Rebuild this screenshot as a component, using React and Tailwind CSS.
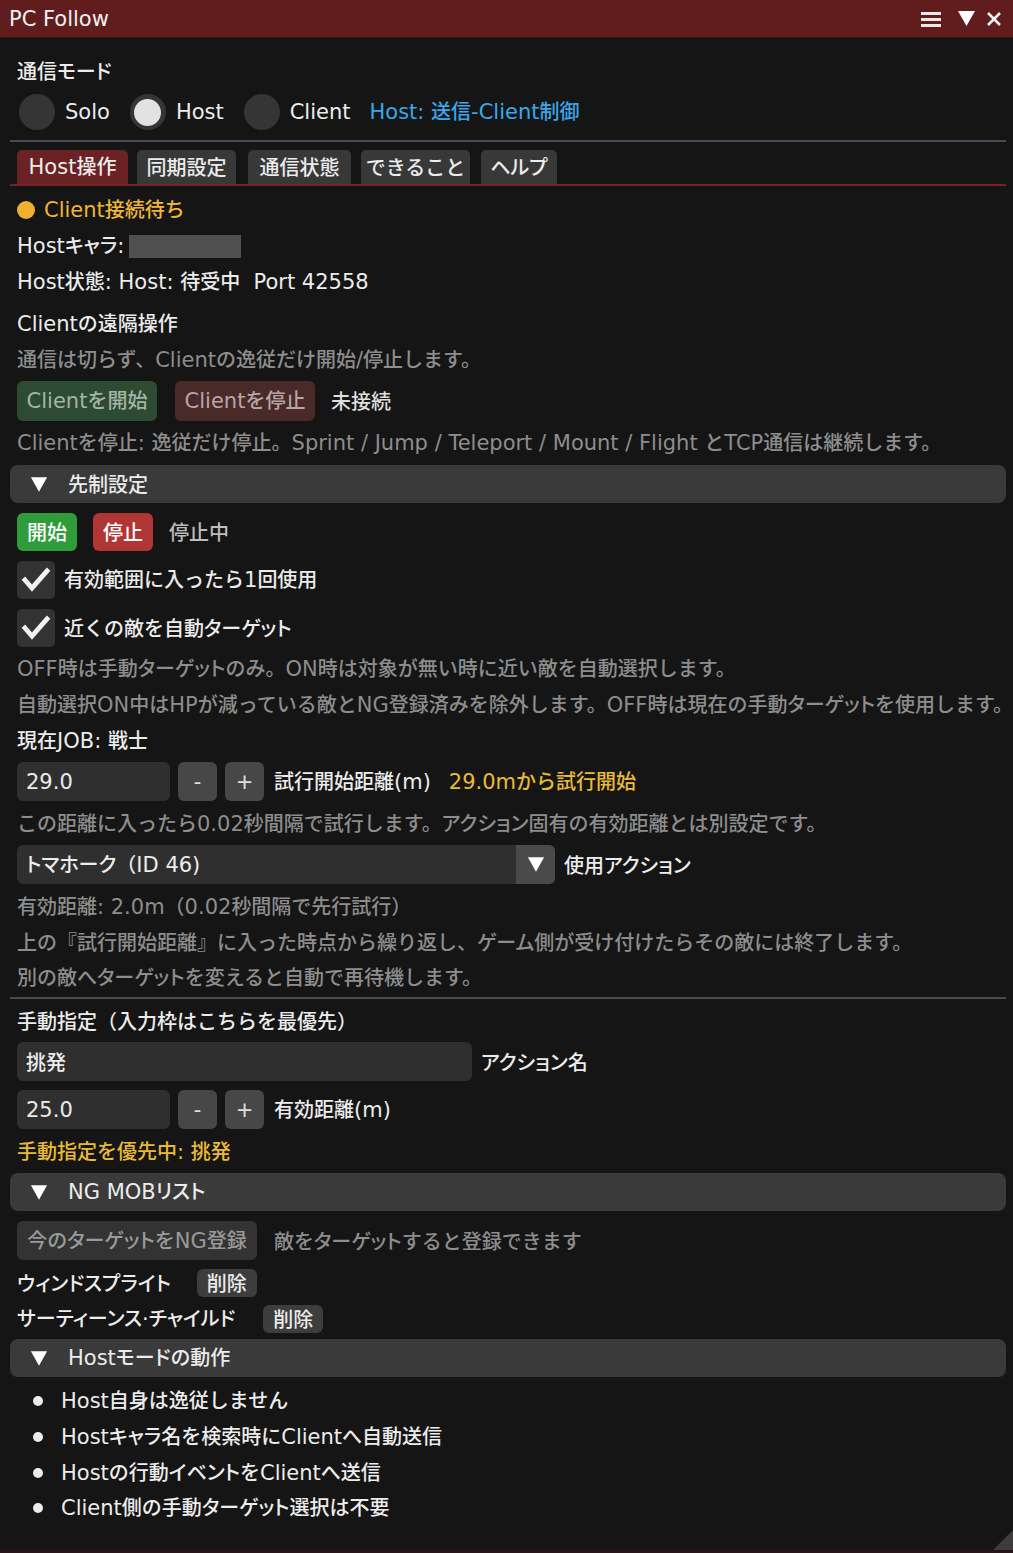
import React from "react";

const SPLIT = /([\u30A0-\u30FF]+|[\x20-\x7E\u00B7]+)/;
const KATA = /^[\u30A0-\u30FF]+$/;
const LAT = /^[\x20-\x7E\u00B7]+$/;

const T = ({ children }) => {
  const s = String(children);
  const parts = s.split(SPLIT).filter((p) => p !== "");
  return (
    <span className="whitespace-pre">
      {parts.map((p, i) => {
        if (KATA.test(p)) return <span key={i} className="[font-feature-settings:'palt']">{p}</span>;
        if (LAT.test(p)) return <span key={i} className="font-['DejaVu_Sans',sans-serif] text-[21px] font-normal">{p}</span>;
        return <span key={i}>{p}</span>;
      })}
    </span>
  );
};

const Tri = ({ className = "" }) => (
  <svg viewBox="0 0 20 18" className={className}>
    <path d="M1 1 L19 1 L10 17 Z" fill="currentColor" />
  </svg>
);

const Check = () => (
  <svg viewBox="0 0 38 38" className="w-[38px] h-[38px]">
    <path d="M8 19 L15 27 L30 10" fill="none" stroke="#f2f2f2" strokeWidth="4.8" strokeLinecap="square" strokeLinejoin="miter" />
  </svg>
);

const Header = ({ children, mt }) => (
  <div className={`flex items-center h-[38px] rounded-[8px] bg-[#3a3a3a] ${mt}`}>
    <Tri className="w-[18px] h-[17px] ml-[20px] text-white" />
    <span className="ml-[20px] text-[#ececec]"><T>{children}</T></span>
  </div>
);

const Gray = ({ children, h = "h-[36px]", mt = "" }) => (
  <div className={`flex items-center px-[7px] ${h} ${mt} text-[#8d8d8d] whitespace-nowrap`}><T>{children}</T></div>
);

const Line = ({ children, h = "h-[36px]", mt = "", color = "text-[#ececec]" }) => (
  <div className={`flex items-center px-[7px] ${h} ${mt} ${color} whitespace-nowrap`}>{typeof children === "string" ? <T>{children}</T> : children}</div>
);

const Stepper = ({ value, label, extra }) => (
  <>
    <div className="w-[153px] h-full rounded-[6px] bg-[#2f2f2f] flex items-center pl-[9px] text-[#ececec]"><T>{value}</T></div>
    <div className="ml-[8px] w-[39px] h-full rounded-[6px] bg-[#474747] flex items-center justify-center text-[#e0e0e0]"><T>-</T></div>
    <div className="ml-[8px] w-[39px] h-full rounded-[6px] bg-[#474747] flex items-center justify-center text-[#e0e0e0]"><T>+</T></div>
    <span className="ml-[10px] text-[#ececec]"><T>{label}</T></span>
    {extra}
  </>
);

export default function App() {
  return (
    <div className="w-[1013px] h-[1553px] bg-[#2a1414] font-['Noto_Sans_CJK_JP',sans-serif] font-medium text-[20px] leading-none overflow-hidden">
      <div className="h-[1550px] bg-[#151515] flex flex-col relative">
        {/* title bar */}
        <div className="h-[38px] bg-[#611d1e] flex items-center border-b border-[#3a1010]">
          <span className="ml-[9px] text-[#f0f0f0]"><T>PC Follow</T></span>
          <div className="ml-auto flex items-center mr-[11px]">
            <svg viewBox="0 0 20 16" className="w-[20px] h-[16px]">
              <rect x="0" y="1" width="20" height="3" fill="#e8e8e8" />
              <rect x="0" y="7" width="20" height="3" fill="#e8e8e8" />
              <rect x="0" y="13" width="20" height="3" fill="#e8e8e8" />
            </svg>
            <Tri className="ml-[16px] w-[19px] h-[17px] text-white" />
            <svg viewBox="0 0 16 16" className="ml-[10px] w-[16px] h-[16px]">
              <path d="M2 2 L14 14 M14 2 L2 14" stroke="#f0f0f0" strokeWidth="2.6" />
            </svg>
          </div>
        </div>

        <div className="flex flex-col pl-[10px] pr-[7px] pt-[15px]">
          <Line h="h-[36px]">通信モード</Line>

          {/* radios */}
          <div className="flex items-center h-[38px] mt-[4px] px-[9px] text-[#ececec]">
            <div className="w-[36px] h-[36px] rounded-full bg-[#353535]" />
            <span className="ml-[10px]"><T>Solo</T></span>
            <div className="ml-[20px] w-[36px] h-[36px] rounded-full bg-[#353535] flex items-center justify-center">
              <div className="w-[27px] h-[27px] rounded-full bg-[#e2e2e2]" />
            </div>
            <span className="ml-[10px]"><T>Host</T></span>
            <div className="ml-[20px] w-[36px] h-[36px] rounded-full bg-[#353535]" />
            <span className="ml-[10px]"><T>Client</T></span>
            <span className="ml-[19px] text-[#3aa7ea]"><T>Host: 送信-Client制御</T></span>
          </div>

          <div className="h-[2px] mt-[9px] bg-[#4a4a56]" />

          {/* tabs */}
          <div className="flex items-end h-[34px] mt-[8px] pl-[7px] text-[#ececec]">
            <div className="h-full w-[111px] rounded-t-[5px] bg-[#6a2224] flex items-center justify-center"><T>Host操作</T></div>
            <div className="h-full ml-[9px] w-[99px] rounded-t-[5px] bg-[#383838] flex items-center justify-center"><T>同期設定</T></div>
            <div className="h-full ml-[12px] w-[103px] rounded-t-[5px] bg-[#383838] flex items-center justify-center"><T>通信状態</T></div>
            <div className="h-full ml-[10px] w-[109px] rounded-t-[5px] bg-[#383838] flex items-center justify-center"><T>できること</T></div>
            <div className="h-full ml-[11px] w-[76px] rounded-t-[5px] bg-[#383838] flex items-center justify-center"><T>ヘルプ</T></div>
          </div>
          <div className="h-[2px] bg-[#7a2222]" />

          <Line mt="mt-[6px]" color="text-[#efb43a]">
            <span className="w-[18px] h-[18px] rounded-full bg-[#efb030] mr-[9px]" />
            <T>Client接続待ち</T>
          </Line>
          <Line>
            <T>Hostキャラ:</T>
            <span className="ml-[5px] w-[112px] h-[23px] bg-[#505050]" />
          </Line>
          <Line h="h-[35px]">{"Host状態: Host: 待受中  Port 42558"}</Line>
          <Line mt="mt-[7px]">Clientの遠隔操作</Line>
          <Gray>通信は切らず、Clientの逸従だけ開始/停止します。</Gray>

          <div className="flex items-center h-[40px] mt-[3px] px-[7px]">
            <div className="h-full w-[140px] rounded-[6px] bg-[#2d4a33] text-[#a3b5a5] flex items-center justify-center"><T>Clientを開始</T></div>
            <div className="h-full ml-[18px] w-[140px] rounded-[6px] bg-[#4a2a29] text-[#b6a6a5] flex items-center justify-center"><T>Clientを停止</T></div>
            <span className="ml-[16px] text-[#dedede]"><T>未接続</T></span>
          </div>
          <Gray mt="mt-[4px]">Clientを停止: 逸従だけ停止。Sprint / Jump / Teleport / Mount / Flight とTCP通信は継続します。</Gray>

          <Header mt="mt-[4px]">先制設定</Header>

          <div className="flex items-center h-[38px] mt-[10px] px-[7px]">
            <div className="h-full w-[60px] rounded-[6px] bg-[#2f9c3c] text-white flex items-center justify-center"><T>開始</T></div>
            <div className="h-full ml-[16px] w-[60px] rounded-[6px] bg-[#b03636] text-white flex items-center justify-center"><T>停止</T></div>
            <span className="ml-[16px] text-[#bdbdbd]"><T>停止中</T></span>
          </div>

          <div className="flex items-center h-[38px] mt-[10px] px-[7px] text-[#ececec]">
            <div className="w-[38px] h-[38px] rounded-[5px] bg-[#333333]"><Check /></div>
            <span className="ml-[9px]"><T>有効範囲に入ったら1回使用</T></span>
          </div>
          <div className="flex items-center h-[38px] mt-[10px] px-[7px] text-[#ececec]">
            <div className="w-[38px] h-[38px] rounded-[5px] bg-[#333333]"><Check /></div>
            <span className="ml-[9px]"><T>近くの敵を自動ターゲット</T></span>
          </div>

          <Gray mt="mt-[4px]">OFF時は手動ターゲットのみ。ON時は対象が無い時に近い敵を自動選択します。</Gray>
          <Gray>自動選択ON中はHPが減っている敵とNG登録済みを除外します。OFF時は現在の手動ターゲットを使用します。</Gray>
          <Line>現在JOB: 戦士</Line>

          <div className="flex items-center h-[39px] mt-[3px] px-[7px]">
            <Stepper value="29.0" label="試行開始距離(m)" extra={<span className="ml-[18px] text-[#e9bb35]"><T>29.0mから試行開始</T></span>} />
          </div>
          <Gray mt="mt-[5px]">この距離に入ったら0.02秒間隔で試行します。アクション固有の有効距離とは別設定です。</Gray>

          <div className="flex items-center h-[39px] mt-[3px] px-[7px]">
            <div className="h-full w-[538px] rounded-[6px] bg-[#2f2f2f] flex items-center overflow-hidden">
              <span className="ml-[9px] text-[#ececec]"><T>トマホーク（ID 46)</T></span>
              <div className="ml-auto w-[39px] h-full bg-[#4a4a4a] flex items-center justify-center">
                <Tri className="w-[18px] h-[17px] text-white" />
              </div>
            </div>
            <span className="ml-[9px] text-[#ececec]"><T>使用アクション</T></span>
          </div>

          <Gray h="h-[35px]" mt="mt-[5px]">有効距離: 2.0m（0.02秒間隔で先行試行）</Gray>
          <Gray h="h-[35px]">上の『試行開始距離』に入った時点から繰り返し、ゲーム側が受け付けたらその敵には終了します。</Gray>
          <Gray h="h-[35px]">別の敵へターゲットを変えると自動で再待機します。</Gray>

          <div className="h-[2px] mt-[3px] bg-[#4a4a56]" />

          <Line mt="mt-[4px]">手動指定（入力枠はこちらを最優先）</Line>
          <div className="flex items-center h-[39px] mt-[3px] px-[7px]">
            <div className="h-full w-[455px] rounded-[6px] bg-[#2f2f2f] flex items-center pl-[9px] text-[#ececec]"><T>挑発</T></div>
            <span className="ml-[9px] text-[#ececec]"><T>アクション名</T></span>
          </div>
          <div className="flex items-center h-[39px] mt-[9px] px-[7px]">
            <Stepper value="25.0" label="有効距離(m)" />
          </div>
          <Line mt="mt-[5px]" color="text-[#e9bb35]">手動指定を優先中: 挑発</Line>

          <Header mt="mt-[3px]">NG MOBリスト</Header>

          <div className="flex items-center h-[39px] mt-[10px] px-[7px]">
            <div className="h-full w-[240px] rounded-[6px] bg-[#333333] text-[#9a9a9a] flex items-center justify-center"><T>今のターゲットをNG登録</T></div>
            <span className="ml-[17px] text-[#8d8d8d]"><T>敵をターゲットすると登録できます</T></span>
          </div>
          <div className="flex items-center h-[36px] mt-[5px] px-[7px] text-[#ececec]">
            <T>ウィンドスプライト</T>
            <div className="ml-[26px] h-[28px] w-[60px] rounded-[6px] bg-[#3d3d3d] flex items-center justify-center"><T>削除</T></div>
          </div>
          <div className="flex items-center h-[35px] px-[7px] text-[#ececec]">
            <T>サーティーンス·チャイルド</T>
            <div className="ml-[28px] h-[28px] w-[60px] rounded-[6px] bg-[#3d3d3d] flex items-center justify-center"><T>削除</T></div>
          </div>

          <Header mt="mt-[3px]">Hostモードの動作</Header>

          <div className="flex flex-col mt-[6px] text-[#ececec]">
            {["Host自身は逸従しません", "Hostキャラ名を検索時にClientへ自動送信", "Hostの行動イベントをClientへ送信", "Client側の手動ターゲット選択は不要"].map((t, i) => (
              <div key={i} className={`flex items-center ${i < 2 ? "h-[36px]" : "h-[35px]"}`}>
                <span className="ml-[23px] w-[10px] h-[10px] rounded-full bg-[#ececec]" />
                <span className="ml-[18px]"><T>{t}</T></span>
              </div>
            ))}
          </div>
        </div>

        <svg viewBox="0 0 20 20" className="absolute right-0 bottom-0 w-[20px] h-[20px]">
          <path d="M20 0 L20 20 L0 20 Z" fill="#3c3c3c" />
        </svg>
      </div>
    </div>
  );
}
